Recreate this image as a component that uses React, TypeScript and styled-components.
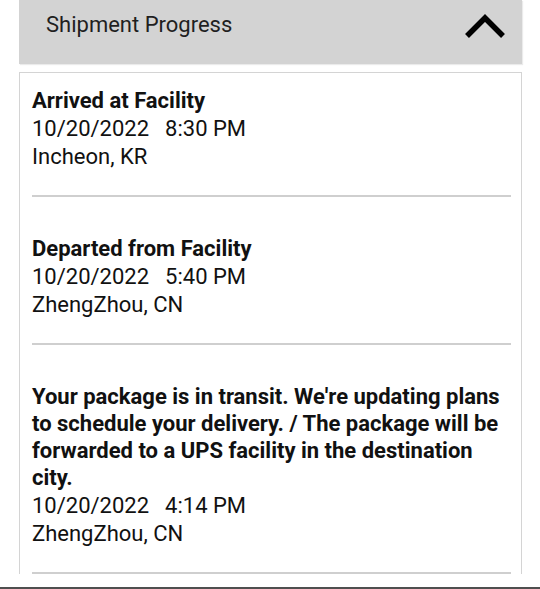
import React from "react";
import styled, { createGlobalStyle } from "styled-components";

const GlobalStyle = createGlobalStyle`
  html, body {
    margin: 0;
    padding: 0;
    background: #ffffff;
    font-family: Roboto, "Noto Sans", Arial, sans-serif;
  }
`;

interface ShipmentEvent {
  status: string;
  date: string;
  time: string;
  location: string;
}

const events: ShipmentEvent[] = [
  {
    status: "Arrived at Facility",
    date: "10/20/2022",
    time: "8:30 PM",
    location: "Incheon, KR",
  },
  {
    status: "Departed from Facility",
    date: "10/20/2022",
    time: "5:40 PM",
    location: "ZhengZhou, CN",
  },
  {
    status:
      "Your package is in transit. We're updating plans to schedule your delivery. / The package will be forwarded to a UPS facility in the destination city.",
    date: "10/20/2022",
    time: "4:14 PM",
    location: "ZhengZhou, CN",
  },
];

const Screen = styled.div`
  height: 589px;
  box-sizing: border-box;
  overflow: hidden;
  border-bottom: 2px solid #4f4f4f;
  padding: 0 18px 0 19px;
`;

const Header = styled.div`
  height: 64px;
  box-sizing: border-box;
  background: #d3d3d3;
  display: flex;
  justify-content: space-between;
  align-items: flex-start;
  padding: 11px 16px 0 27px;
  box-shadow: 1px 1px 1px rgba(0, 0, 0, 0.08);
`;

const HeaderTitle = styled.span`
  font-size: 22px;
  line-height: 28px;
  color: #1f1f1f;
`;

const Chevron = styled.svg`
  width: 42px;
  height: 28px;
  margin-top: 1px;
`;

const Card = styled.div`
  margin-top: 8px;
  border: 1px solid #d4d4d4;
  border-bottom: none;
  padding: 14px 10px 0 12px;
  background: #ffffff;
`;

const Item = styled.div`
  padding-bottom: 24px;
  border-bottom: 2px solid #cfcfcf;
  color: #111111;

  & + & {
    padding-top: 38px;
  }
`;

const Status = styled.div`
  font-size: 22px;
  font-weight: 700;
  line-height: 27px;
  margin-bottom: 1px;
`;

const Line = styled.div`
  font-size: 22px;
  line-height: 28px;
  display: flex;
  gap: 16px;
`;

export default function App() {
  return (
    <>
      <GlobalStyle />
      <Screen>
        <Header>
          <HeaderTitle>Shipment Progress</HeaderTitle>
          <Chevron viewBox="0 0 42 28">
            <polyline
              points="3,24 21,6 39,24"
              fill="none"
              stroke="#000"
              strokeWidth="5.5"
              strokeLinecap="butt"
            />
          </Chevron>
        </Header>
        <Card>
          {events.map((e, i) => (
            <Item key={i}>
              <Status>{e.status}</Status>
              <Line>
                <span>{e.date}</span>
                <span>{e.time}</span>
              </Line>
              <Line>{e.location}</Line>
            </Item>
          ))}
        </Card>
      </Screen>
    </>
  );
}
